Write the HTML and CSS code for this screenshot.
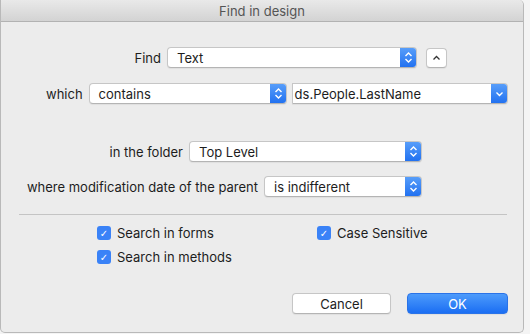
FILE: index.html
```html
<!DOCTYPE html>
<html lang="en">
<head>
  <meta charset="UTF-8" />
  <title>Find in design</title>
  <link rel="stylesheet" href="styles.css">
</head>
<body>
  <div class="window">
    <div class="titlebar">Find in design</div>

    <div class="content">
      <div class="row row-find">
        <span class="label">Find</span>
        <div class="popup popup-find">
          <span>Text</span>
          <span class="stepper">
            <svg width="9" height="13" viewBox="0 0 9 13"><path d="M1.5 5 L4.5 2 L7.5 5 M1.5 8 L4.5 11 L7.5 8" fill="none" stroke="#fff" stroke-width="1.4"/></svg>
          </span>
        </div>
        <button class="toggle">
          <svg width="9" height="6" viewBox="0 0 9 6"><path d="M1.5 4.5 L4.5 1.5 L7.5 4.5" fill="none" stroke="#333" stroke-width="1.3"/></svg>
        </button>
      </div>

      <div class="row row-which">
        <span class="label">which</span>
        <div class="popup popup-which">
          <span>contains</span>
          <span class="stepper">
            <svg width="9" height="13" viewBox="0 0 9 13"><path d="M1.5 5 L4.5 2 L7.5 5 M1.5 8 L4.5 11 L7.5 8" fill="none" stroke="#fff" stroke-width="1.4"/></svg>
          </span>
        </div>
        <div class="combo">
          <span>ds.People.LastName</span>
          <span class="stepper">
            <svg width="9" height="6" viewBox="0 0 9 6"><path d="M1.5 1.5 L4.5 4.5 L7.5 1.5" fill="none" stroke="#fff" stroke-width="1.4"/></svg>
          </span>
        </div>
      </div>

      <div class="row row-folder">
        <span class="label">in the folder</span>
        <div class="popup popup-folder">
          <span>Top Level</span>
          <span class="stepper">
            <svg width="9" height="13" viewBox="0 0 9 13"><path d="M1.5 5 L4.5 2 L7.5 5 M1.5 8 L4.5 11 L7.5 8" fill="none" stroke="#fff" stroke-width="1.4"/></svg>
          </span>
        </div>
      </div>

      <div class="row row-date">
        <span class="label">where modification date of the parent</span>
        <div class="popup popup-date">
          <span>is indifferent</span>
          <span class="stepper">
            <svg width="9" height="13" viewBox="0 0 9 13"><path d="M1.5 5 L4.5 2 L7.5 5 M1.5 8 L4.5 11 L7.5 8" fill="none" stroke="#fff" stroke-width="1.4"/></svg>
          </span>
        </div>
      </div>

      <hr class="separator">

      <div class="options">
        <div class="option-col">
          <label class="check"><span class="box">&#10003;</span>Search in forms</label>
          <label class="check"><span class="box">&#10003;</span>Search in methods</label>
        </div>
        <div class="option-col">
          <label class="check"><span class="box">&#10003;</span>Case Sensitive</label>
        </div>
      </div>

      <div class="actions">
        <button class="btn">Cancel</button>
        <button class="btn btn-default">OK</button>
      </div>
    </div>
  </div>
</body>
</html>
```

FILE: styles.css
```css
* {
  box-sizing: border-box;
}

body {
  margin: 0;
  background-color: #f4f4f4;
  font-family: Inter, 'Liberation Sans', sans-serif;
  font-size: 13px;
  color: #1d1d1d;
}

.window {
  width: 524px;
  height: 333px;
  background-color: #ececec;
  border: 1px solid #b9b9b9;
  border-top: none;
  border-radius: 0 5px 5px 5px;
  overflow: hidden;
}

.titlebar {
  height: 22px;
  line-height: 22px;
  text-align: center;
  color: #555;
  background: linear-gradient(#e9e9e9, #d3d3d3);
  border-bottom: 1px solid #b2b2b2;
  border-top-right-radius: 5px;
}

.content {
  padding-top: 25px;
}

.row {
  display: flex;
  align-items: center;
  justify-content: flex-end;
  gap: 6px;
  height: 21px;
}

.row-find {
  padding-right: 76px;
}

.row-which {
  justify-content: flex-start;
  padding-left: 45px;
  margin-top: 15px;
}

.row-folder {
  padding-right: 101px;
  margin-top: 37px;
}

.row-date {
  padding-right: 101px;
  margin-top: 14px;
}

.popup,
.combo {
  display: flex;
  align-items: center;
  justify-content: space-between;
  height: 21px;
  background-color: #fff;
  border: 1px solid #c6c6c6;
  border-bottom-color: #b4b4b4;
  border-radius: 4px;
  box-shadow: 0 1px 1px rgba(0, 0, 0, 0.06);
  padding-left: 9px;
  overflow: hidden;
}

.popup-find {
  width: 250px;
}

.popup-which {
  width: 198px;
}

.combo {
  width: 216px;
  padding-left: 2px;
  border-radius: 0 4px 4px 0;
  margin-left: -1px;
}

.popup-folder {
  width: 233px;
}

.popup-date {
  width: 158px;
}

.stepper {
  display: flex;
  align-items: center;
  justify-content: center;
  width: 17px;
  height: 21px;
  margin: -1px -1px -1px 0;
  background: linear-gradient(#5aa0fa, #1f6ff0);
  border-radius: 0 4px 4px 0;
}

.toggle {
  display: flex;
  align-items: center;
  justify-content: center;
  width: 21px;
  height: 20px;
  margin-left: 3px;
  padding: 0;
  background-color: #fff;
  border: 1px solid #c6c6c6;
  border-bottom-color: #b4b4b4;
  border-radius: 4px;
  box-shadow: 0 1px 1px rgba(0, 0, 0, 0.06);
}

.separator {
  margin: 17px 16px 0 18px;
  border: none;
  border-top: 1px solid #c4c4c4;
}

.options {
  display: flex;
  gap: 83px;
  padding-left: 96px;
  margin-top: 11px;
}

.option-col {
  display: flex;
  flex-direction: column;
  gap: 10px;
  width: 137px;
}

.check {
  display: flex;
  align-items: center;
  gap: 6px;
  height: 14px;
}

.box {
  display: flex;
  align-items: center;
  justify-content: center;
  width: 14px;
  height: 14px;
  border-radius: 3px;
  background-color: #3a82f7;
  color: #fff;
  font-family: 'DejaVu Sans', sans-serif;
  font-size: 10px;
  font-weight: bold;
}

.actions {
  display: flex;
  justify-content: flex-end;
  gap: 16px;
  padding-right: 15px;
  margin-top: 29px;
}

.btn {
  width: 99px;
  height: 21px;
  padding: 0;
  font-family: Inter, 'Liberation Sans', sans-serif;
  font-size: 13px;
  color: #1d1d1d;
  background-color: #fff;
  border: 1px solid #c6c6c6;
  border-bottom-color: #b4b4b4;
  border-radius: 4px;
  box-shadow: 0 1px 1px rgba(0, 0, 0, 0.06);
}

.btn-default {
  width: 101px;
  color: #fff;
  background: linear-gradient(#4d9bfb, #1b6ef3);
  border-color: #2a73e8;
}
```
